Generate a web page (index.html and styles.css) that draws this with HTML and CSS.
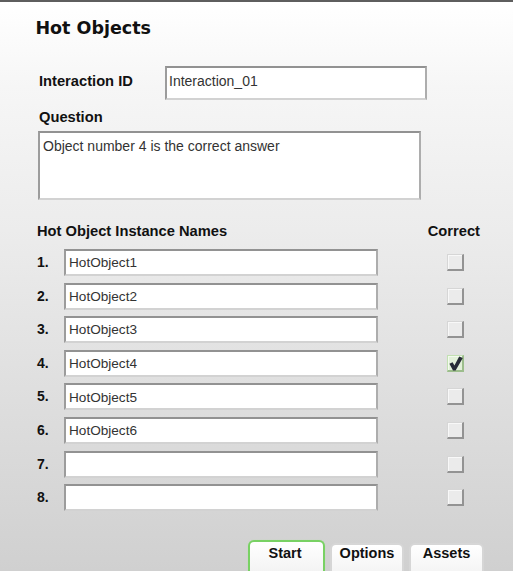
FILE: index.html
```html
<!DOCTYPE html>
<html>
<head>
<meta charset="utf-8">
<link rel="stylesheet" href="styles.css">
</head>
<body>
<div class="panel">
  <h1 class="title">Hot Objects</h1>
  <div class="id-row">
    <span class="label id-label">Interaction ID</span>
    <div class="field id-field">Interaction_01</div>
  </div>
  <div class="label q-label">Question</div>
  <div class="field question">Object number 4 is the correct answer</div>
  <div class="list-head">
    <span class="label">Hot Object Instance Names</span>
    <span class="label">Correct</span>
  </div>
  <div class="rows">
    <div class="row"><span class="num">1.</span><div class="field item">HotObject1</div><span class="check"></span></div>
    <div class="row"><span class="num">2.</span><div class="field item">HotObject2</div><span class="check"></span></div>
    <div class="row"><span class="num">3.</span><div class="field item">HotObject3</div><span class="check"></span></div>
    <div class="row"><span class="num">4.</span><div class="field item">HotObject4</div><span class="check checked"><svg viewBox="0 0 17 17" width="17" height="17"><path d="M2.4 8.8 L5.6 7.2 L7.4 10.6 L12.2 1.6 L15.8 3.0 L8.6 15.6 L6.0 15.6 Z" fill="#262b36"/></svg></span></div>
    <div class="row"><span class="num">5.</span><div class="field item">HotObject5</div><span class="check"></span></div>
    <div class="row"><span class="num">6.</span><div class="field item">HotObject6</div><span class="check"></span></div>
    <div class="row"><span class="num">7.</span><div class="field item"></div><span class="check"></span></div>
    <div class="row"><span class="num">8.</span><div class="field item"></div><span class="check"></span></div>
  </div>
  <div class="tabs">
    <div class="tab active">Start</div>
    <div class="tab options">Options</div>
    <div class="tab assets">Assets</div>
  </div>
</div>
</body>
</html>
```
FILE: styles.css
```css
html, body {
  margin: 0;
  padding: 0;
}
body {
  width: 513px;
  height: 571px;
  overflow: hidden;
  font-family: "Liberation Sans", Arial, sans-serif;
  color: #111;
}
.panel {
  box-sizing: border-box;
  height: 571px;
  border-top: 2px solid #5e5e5e;
  background: linear-gradient(#ffffff 0%, #f6f6f6 15%, #ececec 40%, #dedede 70%, #d0d0d0 100%);
  padding: 0 0 0 37px;
  display: flex;
  flex-direction: column;
  overflow: hidden;
}
.panel > * {
  flex-shrink: 0;
}
.title {
  margin: 16.4px 0 0 -1.6px;
  font-family: "DejaVu Sans", Verdana, sans-serif;
  font-weight: bold;
  font-size: 17.5px;
  line-height: 20px;
  color: #111;
}
.label {
  font-weight: bold;
  font-size: 14.7px;
  line-height: 17px;
  color: #111;
}
.field {
  box-sizing: border-box;
  background: #fff;
  border-style: solid;
  border-width: 2px;
  border-color: #929292 #adadad #d2d2d2 #9c9c9c;
  color: #333;
  font-size: 14px;
  line-height: 16px;
  padding: 5px 3px 0 3px;
  white-space: nowrap;
  overflow: hidden;
  flex-shrink: 0;
}
.id-row {
  display: flex;
  align-items: flex-start;
  margin: 27.6px 0 0 2px;
}
.id-label {
  width: 126px;
  margin-top: 7px;
}
.id-field {
  width: 262px;
  height: 34px;
  padding-left: 2px;
}
.q-label {
  margin: 8.6px 0 0 2px;
}
.question {
  width: 383px;
  height: 69px;
  margin: 5.4px 0 0 1px;
}
.list-head {
  display: flex;
  justify-content: space-between;
  width: 443px;
  margin-top: 22.9px;
}
.rows {
  display: flex;
  flex-direction: column;
  gap: 6.6px;
  margin-top: 9.1px;
}
.row {
  display: flex;
  align-items: center;
  height: 27px;
  flex-shrink: 0;
}
.num {
  width: 27px;
  flex-shrink: 0;
  font-weight: bold;
  font-size: 14px;
  line-height: 16px;
  padding-bottom: 1px;
  color: #111;
}
.item {
  width: 314px;
  height: 27px;
  font-size: 13.6px;
  padding-top: 4.3px;
}
.check {
  box-sizing: border-box;
  flex-shrink: 0;
  width: 17px;
  height: 17px;
  margin-left: 69px;
  background: #ebebeb;
  border-style: solid;
  border-width: 1px 2px 2px 1px;
  border-color: #d6d6d6 #939393 #939393 #d6d6d6;
  box-shadow: inset 1px 1px 0 #f8f8f8;
  position: relative;
}
.check.checked {
  background: #e2f0d9;
  border-color: #c2e0b2 #9cbd8c #9cbd8c #c2e0b2;
  box-shadow: inset 1px 1px 0 #f3faee;
}
.check svg {
  position: absolute;
  left: -1px;
  top: -1px;
}
.tabs {
  display: flex;
  justify-content: flex-end;
  align-items: flex-start;
  gap: 5px;
  padding-right: 29px;
  margin-top: 28.8px;
}
.tab {
  box-sizing: border-box;
  flex-shrink: 0;
  height: 40px;
  border: 2px solid #d6d6d6;
  border-bottom: none;
  border-radius: 6px 6px 0 0;
  background: linear-gradient(#ffffff, #f0f0f0);
  font-weight: bold;
  font-size: 14.5px;
  line-height: 17px;
  text-align: center;
  color: #111;
  padding-top: 0;
  margin-top: 3px;
}
.tab.active {
  width: 77px;
  margin-top: 0;
  padding-top: 3px;
  padding-right: 3px;
  border-color: #78d163;
  box-shadow: 0 0 1px #a9e59a;
}
.tab.options {
  width: 74px;
}
.tab.assets {
  width: 75px;
}
```
